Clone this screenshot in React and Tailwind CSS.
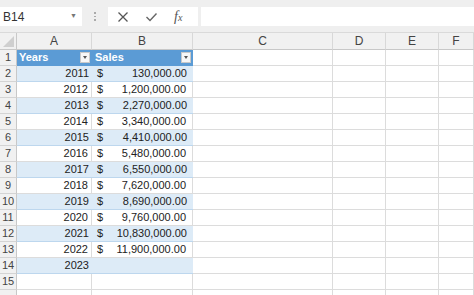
import React from "react";

const rows = [
  ["2011", "130,000.00"],
  ["2012", "1,200,000.00"],
  ["2013", "2,270,000.00"],
  ["2014", "3,340,000.00"],
  ["2015", "4,410,000.00"],
  ["2016", "5,480,000.00"],
  ["2017", "6,550,000.00"],
  ["2018", "7,620,000.00"],
  ["2019", "8,690,000.00"],
  ["2020", "9,760,000.00"],
  ["2021", "10,830,000.00"],
  ["2022", "11,900,000.00"],
  ["2023", null],
];

const cols = ["A", "B", "C", "D", "E", "F"];

const FilterBtn = () => (
  <div className="w-[10px] h-[11px] bg-[#f7f7f7] border border-[#c9c9c9] flex items-center justify-center">
    <div className="w-0 h-0 border-l-[2.5px] border-r-[2.5px] border-t-[3px] border-l-transparent border-r-transparent border-t-[#555]" />
  </div>
);

const RowHead = ({ n }) => (
  <div className="h-[16px] bg-[#f1f1f1] border-b border-r border-[#d4d4d4] border-r-[#c8c8c8] flex items-center justify-center text-[#444]">
    {n}
  </div>
);

const Blank = () => <div className="h-[16px] border-b border-r border-[#dcdcdc]" />;

export default function App() {
  return (
    <div className="w-[474px] h-[295px] overflow-hidden bg-white text-[11px] text-[#222]" style={{ fontFamily: '"Liberation Sans", Arial, sans-serif' }}>
      {/* formula bar */}
      <div className="h-[33px] bg-[#efefef] flex items-start pt-[7px] border-b border-[#dadada]">
        <div className="w-[82px] h-[19px] bg-white flex items-center justify-between pl-[3px] pr-[5px] text-[12px] text-[#333]">
          <span>B14</span>
          <span className="text-[7px] text-[#777]">▼</span>
        </div>
        <div className="w-[26px] h-[19px] flex flex-col items-center justify-center gap-[2px]">
          <div className="w-[1.5px] h-[1.5px] bg-[#aaa]" />
          <div className="w-[1.5px] h-[1.5px] bg-[#aaa]" />
          <div className="w-[1.5px] h-[1.5px] bg-[#aaa]" />
        </div>
        <div className="w-[90px] h-[19px] bg-white flex items-center pl-[9px] gap-[16px]">
          <svg width="12" height="12" viewBox="0 0 12 12">
            <path d="M1.5 1.5 L10.5 10.5 M10.5 1.5 L1.5 10.5" stroke="#555" strokeWidth="1.3" fill="none" />
          </svg>
          <svg width="13" height="12" viewBox="0 0 13 12">
            <path d="M1.5 6 L5 9.5 L11.5 2.5" stroke="#666" strokeWidth="1.4" fill="none" />
          </svg>
          <span className="italic text-[#555] text-[14px] leading-none" style={{ fontFamily: '"Liberation Serif", serif' }}>
            f<span className="text-[10px]">x</span>
          </span>
        </div>
        <div className="ml-[3px] flex-1 h-[19px] bg-white" />
      </div>

      {/* sheet */}
      <div className="grid grid-cols-[17px_75px_101px_140px_53px_53px_1fr]">
        {/* column headers */}
        <div className="h-[17px] bg-[#f1f1f1] border-b border-r border-[#c8c8c8] flex items-end justify-end pr-[2px] pb-[2px]">
          <svg width="11" height="11" viewBox="0 0 11 11">
            <path d="M11 0 L11 11 L0 11 Z" fill="#cfcfcf" />
          </svg>
        </div>
        {cols.map((c) => (
          <div key={c} className="h-[17px] bg-[#f1f1f1] border-b border-r border-[#c8c8c8] border-r-[#d8d8d8] flex items-center justify-center text-[#444] text-[12px]">
            {c}
          </div>
        ))}

        {/* row 1 - table header */}
        <RowHead n={1} />
        <div className="h-[16px] bg-[#5b9bd5] border-b border-[#5b9bd5] flex items-center justify-between pl-[2px] pr-[2px] text-white font-bold">
          <span>Years</span>
          <FilterBtn />
        </div>
        <div className="h-[16px] bg-[#5b9bd5] border-b border-[#5b9bd5] flex items-center justify-between pl-[3px] pr-[2px] text-white font-bold">
          <span>Sales</span>
          <FilterBtn />
        </div>
        <Blank />
        <Blank />
        <Blank />
        <Blank />

        {rows.map(([year, sales], i) => {
          const band = i % 2 === 0;
          const cell = band
            ? "h-[16px] bg-[#ddebf7] border-b border-[#bdd7ee] flex items-center"
            : "h-[16px] bg-white border-b border-r border-[#dcdcdc] flex items-center";
          return (
            <React.Fragment key={year}>
              <RowHead n={i + 2} />
              <div className={cell + " justify-end pr-[3px]"}>{year}</div>
              <div className={cell + " justify-between pl-[5px] pr-[6px]"}>
                {sales && (
                  <>
                    <span>$</span>
                    <span>{sales}</span>
                  </>
                )}
              </div>
              <Blank />
              <Blank />
              <Blank />
              <Blank />
            </React.Fragment>
          );
        })}

        {[15, null].map((n, k) => (
          <React.Fragment key={k}>
            <RowHead n={n} />
            <Blank />
            <Blank />
            <Blank />
            <Blank />
            <Blank />
            <Blank />
          </React.Fragment>
        ))}
      </div>
    </div>
  );
}
